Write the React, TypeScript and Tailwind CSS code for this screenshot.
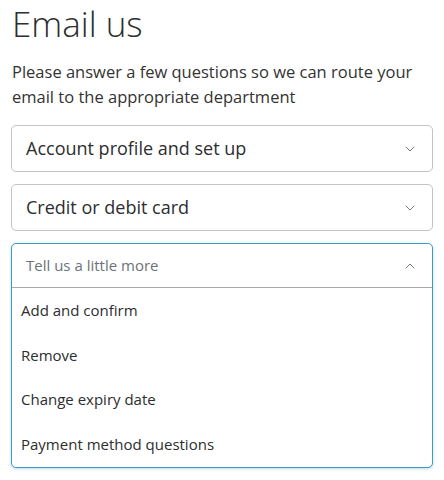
import { ChevronDown, ChevronUp } from 'lucide-react'

const options = ['Add and confirm', 'Remove', 'Change expiry date', 'Payment method questions']

function SelectBox({ label }: { label: string }) {
  return (
    <div className="flex h-[47px] items-center justify-between rounded-[5px] border border-[#c4c4c4] bg-white pl-[14px] pr-[14px]">
      <span className="text-[18px] text-[#2c2e2f]">{label}</span>
      <ChevronDown className="h-[16px] w-[16px] text-[#6c7378]" strokeWidth={1.4} />
    </div>
  )
}

export default function App() {
  return (
    <div className="min-h-[480px] bg-white px-[11px] font-['Open_Sans',sans-serif]">
      <h1 className="pl-[1px] pt-[2px] text-[35px] font-light leading-[44px] text-[#2c2e2f]">Email us</h1>
      <p className="mt-[13px] pl-[1px] text-[16.5px] leading-[25px] text-[#333]">
        Please answer a few questions so we can route your email to the appropriate department
      </p>
      <div className="mt-[16px] flex flex-col gap-[12px]">
        <SelectBox label="Account profile and set up" />
        <SelectBox label="Credit or debit card" />
        <div className="overflow-hidden rounded-[5px] border border-[#3d9bc4] bg-white shadow-[0_1px_3px_rgba(61,155,196,0.35)]">
          <div className="flex h-[44px] items-center justify-between border-b border-[#a8a8a8] pl-[14px] pr-[14px]">
            <span className="text-[15px] text-[#6c7378]">Tell us a little more</span>
            <ChevronUp className="h-[16px] w-[16px] text-[#6c7378]" strokeWidth={1.4} />
          </div>
          <ul className="flex flex-col pb-[1px]">
            {options.map((o) => (
              <li key={o} className="flex h-[44.5px] items-center pl-[9px] text-[15px] text-[#2c2e2f]">
                {o}
              </li>
            ))}
          </ul>
        </div>
      </div>
    </div>
  )
}
